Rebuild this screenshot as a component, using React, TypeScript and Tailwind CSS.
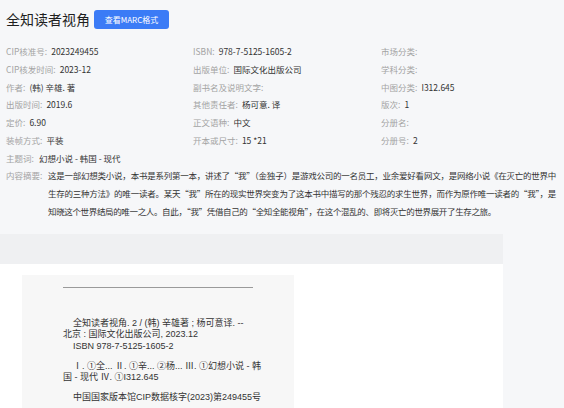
import React from "react";

const rows: [string, string][][] = [
  [["CIP核准号", "2023249455"], ["ISBN", "978-7-5125-1605-2"], ["市场分类", ""]],
  [["CIP核发时间", "2023-12"], ["出版单位", "国际文化出版公司"], ["学科分类", ""]],
  [["作者", "(韩) 辛雄. 著"], ["副书名及说明文字", ""], ["中图分类", "I312.645"]],
  [["出版时间", "2019.6"], ["其他责任者", "杨可意. 译"], ["版次", "1"]],
  [["定价", "6.90"], ["正文语种", "中文"], ["分册名", ""]],
  [["装帧方式", "平装"], ["开本或尺寸", "15 *21"], ["分册号", "2"]],
];

function Field({ label, value }: { label: string; value: string }) {
  return (
    <div className="whitespace-nowrap">
      <span className="text-[#a3a3a3]">{label}:</span>
      {value && <span className="ml-[4px] text-[#333]">{value}</span>}
    </div>
  );
}

export default function App() {
  return (
    <div className="w-[564px] h-[408px] overflow-hidden bg-[#f6f7f9] font-['Noto_Sans_CJK_SC',sans-serif]">
      <div className="flex items-center gap-[4px] pl-[6px] pt-[10px] h-[29px]">
        <h1 className="text-[14px] leading-[19px] font-normal text-[#1f1f1f]">全知读者视角</h1>
        <button className="w-[75px] h-[19px] rounded-[3px] bg-[#3b7bf6] text-white text-[8px] leading-[19px]">
          查看MARC格式
        </button>
      </div>
      <div className="mt-[14px] pl-[6px] text-[8.5px] leading-[17.75px]">
        {rows.map((r, i) => (
          <div key={i} className="grid grid-cols-[187px_188px_1fr]">
            {r.map(([l, v]) => (
              <Field key={l} label={l} value={v} />
            ))}
          </div>
        ))}
        <div className="flex">
          <span className="text-[#a3a3a3] w-[33px]">主题词:</span>
          <span className="text-[#333]">幻想小说 - 韩国 - 现代</span>
        </div>
        <div className="flex">
          <span className="text-[#a3a3a3] w-[42px] shrink-0">内容摘要:</span>
          <div className="text-[#333] w-[508px] tracking-[-0.35px]">
            <div className="whitespace-nowrap [text-align-last:justify] text-justify">这是一部幻想类小说，本书是系列第一本，讲述了“我”（金独子）是游戏公司的一名员工，业余爱好看网文，是网络小说《在灭亡的世界中</div>
            <div className="whitespace-nowrap [text-align-last:justify] text-justify">生存的三种方法》的唯一读者。某天“我”所在的现实世界突变为了这本书中描写的那个残忍的求生世界，而作为原作唯一读者的“我”，是</div>
            <div className="whitespace-nowrap">知晓这个世界结局的唯一之人。自此，“我”凭借自己的“全知全能视角”，在这个混乱的、即将灭亡的世界展开了生存之旅。</div>
          </div>
        </div>
      </div>
      <div className="mt-[13px] w-[503px]">
        <div className="h-[30px] bg-[#eff0f2]" />
        <div className="bg-white pt-[11px] pl-[22px] h-[200px]">
          <div className="w-[272px] h-[200px] bg-[#f7f7f7] pt-[12px] pl-[41px] font-['Liberation_Sans','Noto_Sans_CJK_SC',sans-serif] text-[9px] leading-[11.3px] text-[#333]">
            <div className="w-[190px] h-[1.5px] bg-[#9a9a9a]" />
            <div className="mt-[30px]">
              <div className="pl-[10px]">全知读者视角. 2 / (韩) 辛雄著 ; 杨可意译. --</div>
              <div>北京 : 国际文化出版公司, 2023.12</div>
              <div className="pl-[10px]">ISBN 978-7-5125-1605-2</div>
            </div>
            <div className="mt-[9px]">
              <div className="pl-[10px]">Ⅰ. ①全... Ⅱ. ①辛... ②杨... Ⅲ. ①幻想小说 - 韩</div>
              <div>国 - 现代 Ⅳ. ①I312.645</div>
            </div>
            <div className="mt-[9px]">
              <div className="pl-[10px]">中国国家版本馆CIP数据核字(2023)第249455号</div>
            </div>
          </div>
        </div>
      </div>
    </div>
  );
}
